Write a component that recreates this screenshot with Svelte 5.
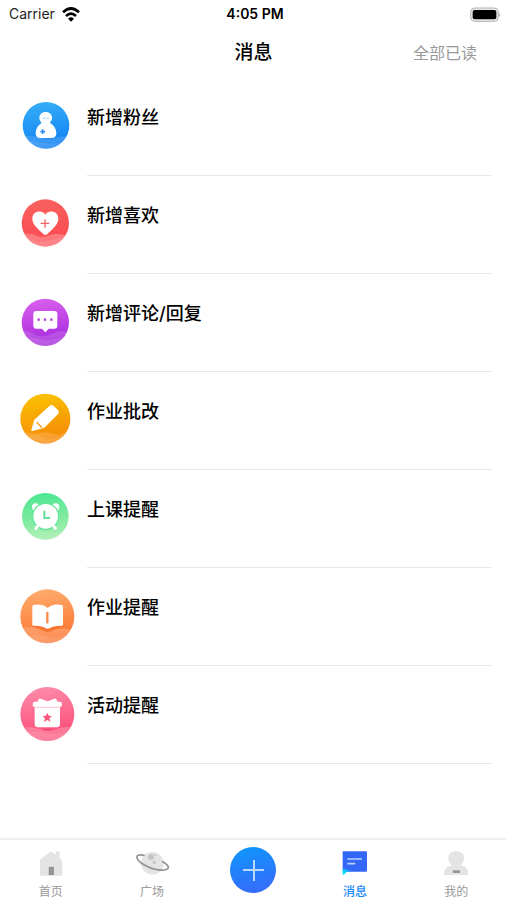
<script>
  const messages = [
    { id: 'fans', label: '新增粉丝', icon: fans },
    { id: 'likes', label: '新增喜欢', icon: likes },
    { id: 'comments', label: '新增评论/回复', icon: comments },
    { id: 'grading', label: '作业批改', icon: grading },
    { id: 'class', label: '上课提醒', icon: clock },
    { id: 'homework', label: '作业提醒', icon: book },
    { id: 'activity', label: '活动提醒', icon: gift }
  ];
</script>

{#snippet gradient(id, from, to)}
  <linearGradient {id} x1="0" y1="0" x2="0.15" y2="1">
    <stop offset="0" stop-color={from} />
    <stop offset="1" stop-color={to} />
  </linearGradient>
{/snippet}

{#snippet fans()}
  <defs>
    {@render gradient('g-fans', '#35b0f7', '#1582f3')}
    <clipPath id="c-fans"><circle cx="108" cy="106" r="70" /></clipPath>
  </defs>
  <circle cx="108" cy="106" r="70" fill="url(#g-fans)" />
  <g clip-path="url(#c-fans)" fill="#fff">
    <path d="M30 140q34-6 62 4 30 6 52-2 20-6 40 2v42H30z" fill-opacity=".14" />
    <path d="M30 160q40-12 74 0 40 6 80-14v45H30z" fill-opacity=".08" />
  </g>
  <circle cx="107" cy="84" r="19" fill="#fff" />
  <path d="M95 99h25q19 11 19 31 0 14-14 14H91q-14 0-14-14 0-20 18-31z" fill="#fff" />
  <path d="M98 84q4 4 8 0M109 84q4 4 8 0" fill="none" stroke="#63aef5" stroke-width="2" />
  <path d="M98 118v14M91 125h14" stroke="#2f8df3" stroke-width="5" />
{/snippet}

{#snippet likes()}
  <defs>
    {@render gradient('g-likes', '#f9625f', '#fb4b52')}
    <clipPath id="c-likes"><circle cx="106" cy="105" r="71" /></clipPath>
  </defs>
  <circle cx="106" cy="105" r="71" fill="url(#g-likes)" />
  <g clip-path="url(#c-likes)" fill="#fff">
    <path d="M30 140q28-8 50 3 24 8 40-2 20-8 60 4v40H30z" fill-opacity=".24" />
    <path d="M30 148q30 0 54 14 38-4 60-12l36-6v45H30z" fill-opacity=".1" />
  </g>
  <path d="M106 80C98 66 67 66 67 93c0 19 24 35 33 45q6 6 12 0c9-10 33-26 33-45 0-27-31-27-39-13z" fill="#fff" />
  <path d="M105 94v25M92 106h26" stroke="#f66265" stroke-width="4" />
{/snippet}

{#snippet comments()}
  <defs>
    {@render gradient('g-comments', '#dc62ef', '#a62bdc')}
    <clipPath id="c-comments"><circle cx="106" cy="109" r="71" /></clipPath>
  </defs>
  <circle cx="106" cy="109" r="71" fill="url(#g-comments)" />
  <g clip-path="url(#c-comments)" fill="#fff">
    <path d="M30 136q26-4 48 12 28 8 52-6 22-10 50-4v50H30z" fill-opacity=".14" />
    <path d="M30 160q34-12 68 2 36 4 82-16v45H30z" fill-opacity=".1" />
  </g>
  <path d="M79 75h54q9 0 9 9v35q0 9-9 9h-17l-10 11-10-11H79q-9 0-9-9V84q0-9 9-9z" fill="#fff" />
  <g fill="#b443df"><circle cx="86" cy="101" r="4" /><circle cx="105" cy="101" r="4" /><circle cx="124" cy="101" r="4" /></g>
{/snippet}

{#snippet grading()}
  <defs>
    {@render gradient('g-grading', '#fac500', '#f88c09')}
    <clipPath id="c-grading"><circle cx="106" cy="104" r="75" /></clipPath>
  </defs>
  <circle cx="106" cy="104" r="75" fill="url(#g-grading)" />
  <g clip-path="url(#c-grading)">
    <path d="M72 84q20-14 34-6l44-10 50 50-50 70-78-50z" fill="#f08c00" fill-opacity=".14" />
    <path d="M25 148q30-6 54 2 36-10 62 4 22-10 50-10v50H25z" fill="#fff" fill-opacity=".17" />
    <path d="M25 168q40-24 86-4 36 4 75-12v45H25z" fill="#fff" fill-opacity=".08" />
  </g>
  <path d="M119 65q6-5 12 1l13 12q5 5 1 11l-43 43-35 9q-4 0-3-4l9-30z" fill="#fff" />
  <path d="M80 115l16 16" stroke="#f59d13" stroke-width="4" />
{/snippet}

{#snippet clock()}
  <defs>
    {@render gradient('g-clock', '#46e690', '#a4edac')}
    <clipPath id="c-clock"><circle cx="106" cy="103" r="70" /></clipPath>
  </defs>
  <circle cx="106" cy="103" r="70" fill="url(#g-clock)" />
  <g clip-path="url(#c-clock)" fill="#fff">
    <path d="M30 144q34-12 70 4 38 8 80-10v55H30z" fill-opacity=".1" />
  </g>
  <circle cx="77" cy="75" r="11" fill="#fff" />
  <circle cx="137" cy="75" r="11" fill="#fff" />
  <path d="M83 128l-5 11M131 128l5 11" stroke="#fff" stroke-width="9" stroke-linecap="round" />
  <circle cx="107" cy="103" r="39" fill="#fff" stroke="#62e698" stroke-width="4" />
  <path d="M84 131l-3 5M130 131l3 5" stroke="#fff" stroke-width="8" stroke-linecap="round" />
  <path d="M103 86v22h17" fill="none" stroke="#65df98" stroke-width="6" />
{/snippet}

{#snippet book()}
  <defs>
    {@render gradient('g-book', '#ffaf71', '#fb742d')}
    <clipPath id="c-book"><circle cx="112" cy="109" r="81" /></clipPath>
  </defs>
  <circle cx="112" cy="109" r="81" fill="url(#g-book)" />
  <g clip-path="url(#c-book)">
    <path d="M25 150q34-18 70 0l18 5q36-16 84-4v45H25z" fill="#fff" fill-opacity=".2" />
    <path d="M25 178q50-26 100-4 36-2 75-18v45H25z" fill="#fff" fill-opacity=".1" />
    <path d="M67 138q24-3 46 10 22-13 46-10l-46 20z" fill="#f36a26" fill-opacity=".55" />
  </g>
  <path d="M71 75q25-6 42 9 17-15 42-9 4 1 4 5v54q0 3-4 3-25-1-42 10-17-11-42-10-4 0-4-3V80q0-4 4-5z" fill="#fff" />
  <path d="M112 99v28" stroke="#f98a4e" stroke-width="7" stroke-linecap="round" />
{/snippet}

{#snippet gift()}
  <defs>
    {@render gradient('g-gift', '#fe8ead', '#fc4c75')}
    <clipPath id="c-gift"><circle cx="112" cy="108" r="81" /></clipPath>
  </defs>
  <circle cx="112" cy="108" r="81" fill="url(#g-gift)" />
  <g clip-path="url(#c-gift)" fill="#fff">
    <path d="M25 152q34-10 64 2 34 10 60-4 24-6 50 0v50H25z" fill-opacity=".22" />
    <path d="M25 176q40-26 86-8 40 2 90-20v50H25z" fill-opacity=".1" />
    <path d="M100 155h26" stroke="#e84670" stroke-width="4" />
  </g>
  <g fill="#fff">
    <path d="M86 64q2-3 6-2l21 8 20-8q4-1 6 2l4 8-8 6H90l-8-6z" />
    <rect x="68" y="71" width="88" height="16" rx="7" />
    <path d="M74 85h76v53q0 10-10 10H84q-10 0-10-10z" />
  </g>
  <path d="M76 88h73" stroke="#f8a4b8" stroke-width="2" />
  <path d="M112 104l4 9 10 1-8 7 3 11-9-6-10 6 3-11-7-7 10-1z" fill="#f8557c" />
{/snippet}

<div class="page">
  <div class="status">
    <span class="carrier">
      Carrier
      <svg class="wifi" viewBox="0 0 54 45" aria-hidden="true">
        <g fill="none" stroke="#000" stroke-width="8">
          <path d="M3 16q24-23 48 0" />
          <path d="M12 27q15-14 30 0" />
        </g>
        <path d="M18 35q9-8 18 0l-9 9z" />
      </svg>
    </span>
    <time>4:05 PM</time>
    <svg class="battery" viewBox="0 0 93 45" aria-hidden="true">
      <rect x="2" y="3" width="83" height="40" rx="12" fill="#e8e8e8" stroke="#b4b4b4" stroke-width="3" />
      <rect x="8" y="9" width="71" height="28" rx="6" />
      <path d="M88 17q5 6 0 12z" fill="#999" />
    </svg>
  </div>

  <header>
    <h1>消息</h1>
    <button class="read" type="button">全部已读</button>
  </header>

  <main>
    <ul>
      {#each messages as item (item.id)}
        <li>
          <a class="row" href="#{item.id}">
            <svg class="badge" viewBox="27 27 168 168" aria-hidden="true">{@render item.icon()}</svg>
            <span class="label">{item.label}</span>
          </a>
        </li>
      {/each}
    </ul>
  </main>

  <nav>
    <a class="tab" href="#home">
      <svg viewBox="99 54 108 84" aria-hidden="true">
        <path d="M122 88l28-22q3-2 6 0l11 8V66q0-2 3-2h6q3 0 3 2v19l6 5q2 2 2 5v39q0 3-3 3h-61q-3 0-3-3V93q0-3 2-5z" fill="#e4e4e4" />
        <path d="M146 113q0-3 3-3h10q3 0 3 3v22h-16z" fill="#959595" />
      </svg>
      首页
    </a>
    <a class="tab" href="#square">
      <svg viewBox="402 54 108 84" aria-hidden="true">
        <circle cx="457" cy="100" r="34" fill="#e4e4e4" />
        <g fill="#c4c4c4"><circle cx="453" cy="81" r="9" /><circle cx="463" cy="97" r="5" /><circle cx="466" cy="75" r="3" /></g>
        <path d="M432 76c-15-3-23 0-21 7 5 18 51 40 81 37 20-2 16-14-4-25" fill="none" stroke="#929292" stroke-width="5" stroke-linecap="round" />
      </svg>
      广场
    </a>
    <button class="add" type="button" aria-label="发布">
      <svg viewBox="0 0 46 46" aria-hidden="true"><path d="M24 13v21M13 23h21" stroke="#b9d9ff" stroke-width="2" /></svg>
    </button>
    <a class="tab active" href="#messages" aria-current="page">
      <svg viewBox="252 54 108 84" aria-hidden="true">
        <defs>
          <linearGradient id="g-tail" x1="0" y1="1" x2="0.7" y2="0">
            <stop offset="0" stop-color="#10f3ff" />
            <stop offset="1" stop-color="#18a6fa" />
          </linearGradient>
        </defs>
        <path d="M272 64h67q3 0 3 3v55q0 3-3 3h-67q-3 0-3-3V67q0-3 3-3z" fill="#3367f5" />
        <path d="M269 116l22 5q-4 5-10 5l-9 9q-3 1-3-2z" fill="url(#g-tail)" />
        <path d="M283 87h44M283 101h24" stroke="#b8d0ff" stroke-width="5" />
      </svg>
      消息
    </a>
    <a class="tab" href="#me">
      <svg viewBox="555 54 108 84" aria-hidden="true">
        <path d="M610 64c29 0 28 29 13 42 16 2 23 13 23 29h-73c0-16 7-27 24-29-16-13-16-42 13-42z" fill="#e4e4e4" />
        <rect x="599" y="121" width="22" height="8" rx="2" fill="#979797" />
      </svg>
      我的
    </a>
  </nav>
</div>

<style>
  :global(body) {
    margin: 0;
    background: #fff;
  }

  .page {
    display: flex;
    flex-direction: column;
    min-height: 100vh;
    color: #000;
    font-family: Inter, 'Noto Sans CJK SC', sans-serif;
  }

  .status,
  header {
    display: grid;
    grid-template-columns: 1fr auto 1fr;
    align-items: center;
  }

  .status {
    height: 28px;
    padding: 0 6px 0 9px;
    font-size: 14px;
    line-height: 28px;
  }

  .carrier {
    display: flex;
    align-items: center;
    gap: 7px;
    color: #222;
  }

  .wifi {
    width: 18px;
    height: 15px;
  }

  time {
    font-weight: 600;
  }

  .battery {
    justify-self: end;
    width: 31px;
    height: 15px;
  }

  header {
    height: 50px;
    padding: 0 30px;
  }

  h1 {
    grid-column: 2;
    margin: 0;
    font-size: 19px;
    font-weight: 500;
    line-height: 28px;
  }

  button {
    padding: 0;
    border: 0;
    background: none;
    font: inherit;
    cursor: pointer;
  }

  .read {
    justify-self: end;
    color: #999;
    font-size: 16px;
    line-height: 24px;
  }

  main {
    flex: 1;
  }

  ul {
    margin: 0;
    padding: 0;
    list-style: none;
  }

  a {
    color: inherit;
    text-decoration: none;
  }

  .row {
    display: flex;
    align-items: center;
    gap: 12px;
    height: 98px;
    padding: 0 15px 0 19px;
  }

  .badge {
    flex: none;
    width: 56px;
    height: 56px;
  }

  .label {
    flex: 1;
    box-sizing: border-box;
    height: 98px;
    padding-top: 26px;
    border-bottom: 1px solid #e8e8e8;
    font-size: 18px;
    font-weight: 500;
    line-height: 28px;
  }

  nav {
    position: sticky;
    bottom: 0;
    display: grid;
    grid-template-columns: repeat(5, 1fr);
    height: 60px;
    background: #fff;
    box-shadow: 0 -1px 4px rgba(0, 0, 0, 0.12);
  }

  .tab {
    display: flex;
    flex-direction: column;
    align-items: center;
    gap: 8px;
    padding-top: 8px;
    color: #999;
    font-size: 12px;
    line-height: 16px;
  }

  .tab svg {
    width: 36px;
    height: 28px;
  }

  .active {
    color: #1989fa;
    font-weight: 500;
  }

  .add {
    place-self: center;
    width: 46px;
    height: 46px;
    border-radius: 50%;
    background: linear-gradient(165deg, #0d98fb, #3a67fb);
  }

  .add svg {
    display: block;
    width: 46px;
    height: 46px;
  }
</style>
